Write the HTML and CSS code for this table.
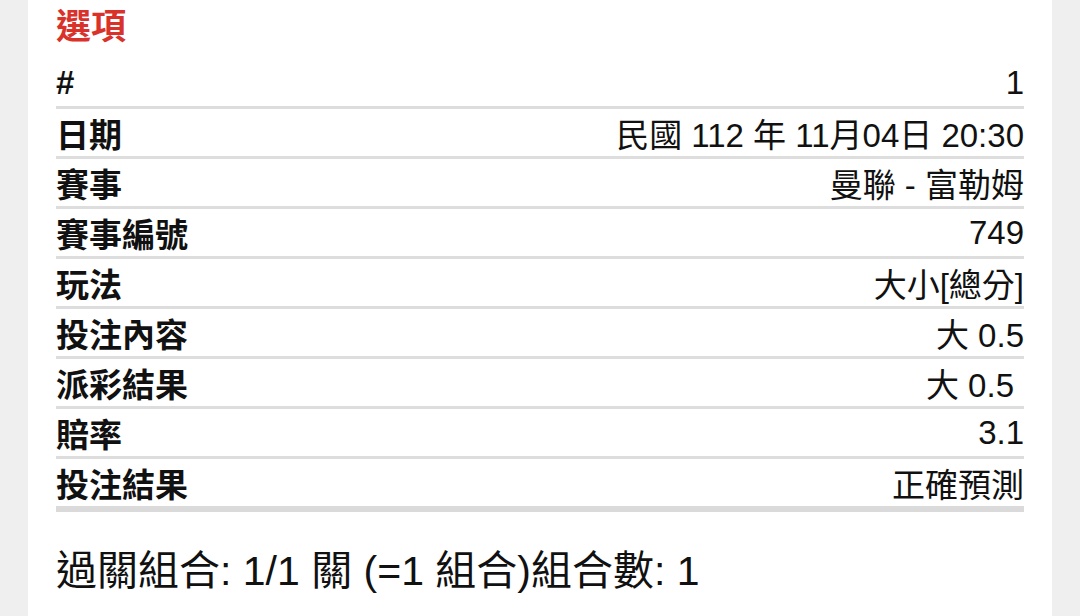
FILE: index.html
```html
<!DOCTYPE html>
<html lang="zh-Hant">
<head>
<meta charset="utf-8">
<title>選項</title>
<link rel="stylesheet" href="styles.css">
</head>
<body>
<div class="card">
  <h2 class="title">選項</h2>
  <div class="table">
    <div class="row"><span class="label">#</span><span class="value">1</span></div>
    <div class="row"><span class="label">日期</span><span class="value">民國 112 年 11月04日 20:30</span></div>
    <div class="row"><span class="label">賽事</span><span class="value">曼聯 - 富勒姆</span></div>
    <div class="row"><span class="label">賽事編號</span><span class="value">749</span></div>
    <div class="row"><span class="label">玩法</span><span class="value">大小[總分]</span></div>
    <div class="row"><span class="label">投注內容</span><span class="value">大 0.5</span></div>
    <div class="row"><span class="label">派彩結果</span><span class="value value-indent">大 0.5</span></div>
    <div class="row"><span class="label">賠率</span><span class="value">3.1</span></div>
    <div class="row row-last"><span class="label">投注結果</span><span class="value">正確預測</span></div>
  </div>
  <p class="summary">過關組合: 1/1 關 (=1 組合)組合數: 1</p>
</div>
</body>
</html>
```
FILE: styles.css
```css
html, body {
  margin: 0;
  padding: 0;
}
body {
  background: #efefef;
  padding: 0 28px;
  height: 616px;
  box-sizing: border-box;
  font-family: "Liberation Sans", "Noto Sans CJK TC", sans-serif;
  color: #111;
  overflow: hidden;
}
.card {
  background: #fff;
  height: 100%;
  padding: 7px 28px 0;
  box-sizing: border-box;
  display: flex;
  flex-direction: column;
}
.title {
  margin: 0;
  font-size: 35px;
  line-height: 40px;
  font-weight: bold;
  color: #d9322b;
}
.table {
  margin-top: 12px;
  display: flex;
  flex-direction: column;
}
.row {
  display: flex;
  justify-content: space-between;
  align-items: center;
  height: 47px;
  border-bottom: 3px solid #dddddd;
  font-size: 33px;
}
.row-last {
  border-bottom-width: 6px;
  border-bottom-color: #dadada;
}
.label {
  font-weight: bold;
}
.value {
  font-weight: normal;
}
.value-indent {
  padding-right: 10px;
}
.summary {
  margin: 35px 0 0;
  font-size: 41px;
  line-height: 48px;
}
```
